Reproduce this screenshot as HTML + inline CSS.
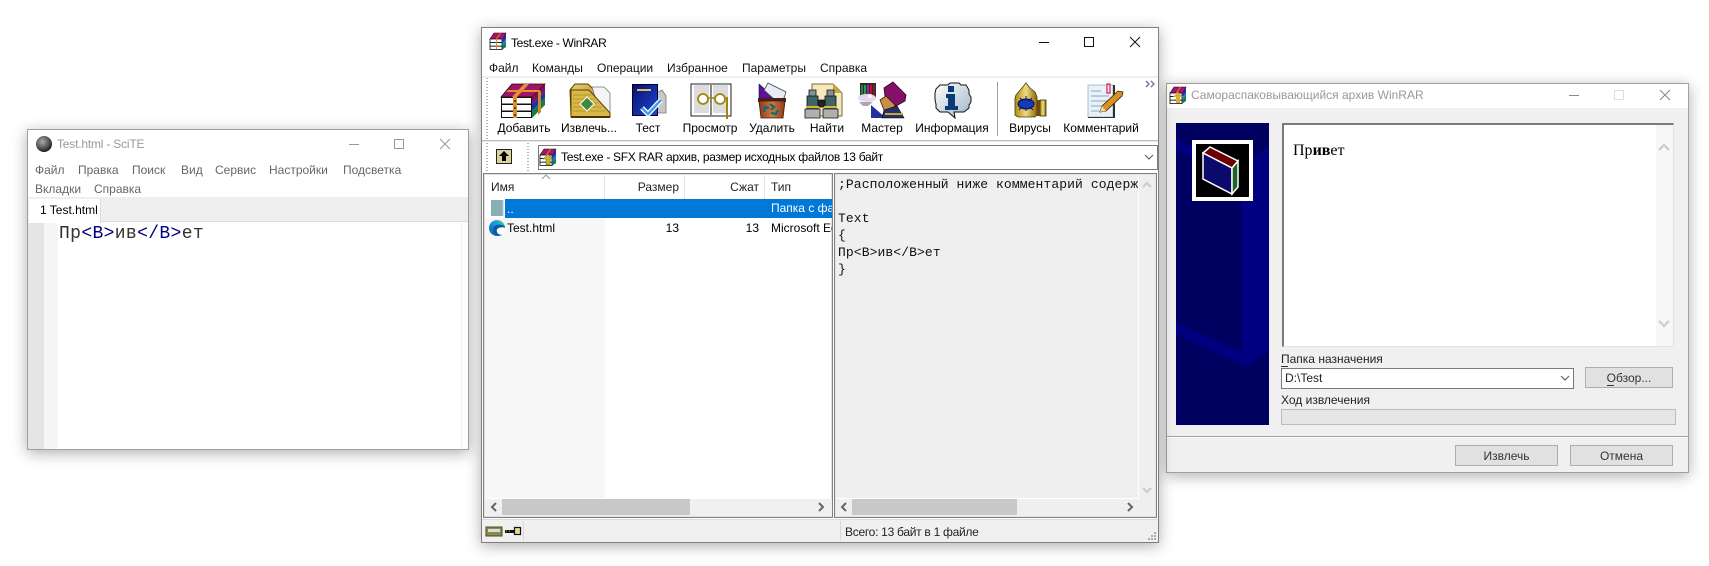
<!DOCTYPE html>
<html><head><meta charset="utf-8"><style>
html,body{margin:0;padding:0;width:1709px;height:566px;overflow:hidden;background:#fff}
body{position:relative;font:12px/16px "Liberation Sans",sans-serif;color:#000}
div{position:absolute;box-sizing:border-box}
.t{white-space:nowrap;height:16px}
.win{box-shadow:0 3px 14px rgba(0,0,0,.32)}
.d{color:#666}.g{color:#999}
.c{transform:translateX(-50%)}
.r{transform:translateX(-100%)}
.m{font-family:"Liberation Mono",monospace;font-size:13px;letter-spacing:.1px;color:#111;line-height:17px;height:17px;white-space:nowrap}
.btn{background:#e1e1e1;border:1px solid #adadad;text-align:center;line-height:20px;color:#333}
svg{position:absolute;left:0;top:0;overflow:visible}
</style></head><body>

<!-- SciTE -->
<div class="win" style="left:27px;top:129px;width:442px;height:321px;background:#fff;border:1px solid #a0a0a0"></div>
<div class="t g" style="left:57px;top:136px;font-size:12px;letter-spacing:-.2px">Test.html - SciTE</div>
<div class="t d" style="left:35px;top:162px">Файл</div>
<div class="t d" style="left:78px;top:162px">Правка</div>
<div class="t d" style="left:132px;top:162px">Поиск</div>
<div class="t d" style="left:181px;top:162px">Вид</div>
<div class="t d" style="left:215px;top:162px">Сервис</div>
<div class="t d" style="left:269px;top:162px">Настройки</div>
<div class="t d" style="left:343px;top:162px">Подсветка</div>
<div class="t d" style="left:35px;top:181px">Вкладки</div>
<div class="t d" style="left:94px;top:181px">Справка</div>
<div style="left:28px;top:197px;width:440px;height:25px;background:#efefef;border-bottom:1px solid #dcdcdc"></div>
<div style="left:29px;top:199px;width:72px;height:24px;background:#fff;border-right:1px solid #dcdcdc"></div>
<div class="t" style="left:40px;top:202px">1 Test.html</div>
<div style="left:28px;top:223px;width:16px;height:226px;background:#e4e4e4"></div>
<div style="left:44px;top:223px;width:14px;height:226px;background:#f5f5f5"></div>
<div style="left:461px;top:223px;width:1px;height:226px;background:#f0f0f0"></div>
<div style="left:59px;top:224px;height:20px;line-height:20px;white-space:nowrap;font-family:'Liberation Mono',monospace;font-size:18px;letter-spacing:.35px;color:#333">Пр<span style="color:#00007f">&lt;B&gt;</span>ив<span style="color:#00007f">&lt;/B&gt;</span>ет</div>

<!-- SFX window -->
<div class="win" style="left:1166px;top:83px;width:523px;height:390px;background:#f0f0f0;border:1px solid #a0a0a0"></div>
<div style="left:1167px;top:84px;width:521px;height:24px;background:#fff"></div>
<div class="t g" style="left:1191px;top:87px">Самораспаковывающийся архив WinRAR</div>
<div style="left:1282px;top:123px;width:392px;height:224px;background:#fff;border:1px solid #e3e3e3;border-top:2px solid #7a7a7a;border-left:2px solid #7a7a7a"></div>
<div style="left:1656px;top:125px;width:17px;height:221px;background:#f7f7f7"></div>
<div style="left:1293px;top:142px;height:18px;line-height:18px;white-space:nowrap;font-family:'Liberation Serif',serif;font-size:16px;color:#000">Пр<b>ив</b>ет</div>
<div class="t" style="left:1281px;top:351px;color:#222">Папка назначения</div>
<div style="left:1281px;top:366px;width:7px;height:1px;background:#333"></div>
<div style="left:1281px;top:368px;width:293px;height:21px;background:#fff;border:1px solid #7a7a7a"></div>
<div class="t" style="left:1285px;top:370px;color:#222">D:\Test</div>
<div class="btn" style="left:1585px;top:367px;width:88px;height:21px">Обзор...</div>
<div style="left:1607px;top:385px;width:7px;height:1px;background:#333"></div>
<div class="t" style="left:1281px;top:392px;color:#222">Ход извлечения</div>
<div style="left:1281px;top:409px;width:395px;height:16px;background:#e6e6e6;border:1px solid #bcbcbc"></div>
<div style="left:1167px;top:436px;width:521px;height:1px;background:#a0a0a0"></div>
<div style="left:1167px;top:437px;width:521px;height:1px;background:#fff"></div>
<div class="btn" style="left:1455px;top:445px;width:103px;height:21px">Извлечь</div>
<div class="btn" style="left:1570px;top:445px;width:103px;height:21px">Отмена</div>

<!-- WinRAR -->
<div class="win" style="left:481px;top:27px;width:678px;height:516px;background:#fff;border:1px solid #7f7f7f"></div>
<div class="t" style="left:511px;top:35px;letter-spacing:-.35px">Test.exe - WinRAR</div>
<div class="t" style="left:489px;top:60px;color:#111">Файл</div>
<div class="t" style="left:532px;top:60px;color:#111">Команды</div>
<div class="t" style="left:597px;top:60px;color:#111">Операции</div>
<div class="t" style="left:667px;top:60px;color:#111">Избранное</div>
<div class="t" style="left:742px;top:60px;color:#111">Параметры</div>
<div class="t" style="left:820px;top:60px;color:#111">Справка</div>
<div style="left:482px;top:76px;width:676px;height:2px;background:#f0f0f0"></div>
<div style="left:486px;top:78px;width:2px;height:62px;background:repeating-linear-gradient(#b5b5b5 0 1px,#fff 1px 3px)"></div>
<div class="t c" style="left:524px;top:120px">Добавить</div>
<div class="t c" style="left:589px;top:120px">Извлечь...</div>
<div class="t c" style="left:648px;top:120px">Тест</div>
<div class="t c" style="left:710px;top:120px">Просмотр</div>
<div class="t c" style="left:772px;top:120px">Удалить</div>
<div class="t c" style="left:827px;top:120px">Найти</div>
<div class="t c" style="left:882px;top:120px">Мастер</div>
<div class="t c" style="left:952px;top:120px">Информация</div>
<div style="left:997px;top:82px;width:1px;height:54px;background:#a0a0a0"></div>
<div class="t c" style="left:1030px;top:120px">Вирусы</div>
<div class="t c" style="left:1101px;top:120px">Комментарий</div>
<div style="left:482px;top:140px;width:676px;height:1px;background:#bdbdbd"></div>
<div style="left:482px;top:141px;width:676px;height:1px;background:#e8e8e8"></div>
<div style="left:486px;top:143px;width:2px;height:28px;background:repeating-linear-gradient(#b5b5b5 0 1px,#fff 1px 3px)"></div>
<div style="left:527px;top:143px;width:2px;height:28px;background:repeating-linear-gradient(#b5b5b5 0 1px,#fff 1px 3px)"></div>
<div style="left:538px;top:145px;width:620px;height:25px;background:#fff;border:1px solid #7a7a7a"></div>
<div class="t" style="left:561px;top:149px;letter-spacing:-.3px">Test.exe - SFX RAR архив, размер исходных файлов 13 байт</div>

<!-- list panel -->
<div style="left:483px;top:173px;width:350px;height:345px;background:#fff;border:1px solid #808080;outline:0"></div>
<div style="left:484px;top:174px;width:348px;height:343px;border:1px solid #e0e0e0"></div>
<div style="left:485px;top:218px;width:120px;height:280px;background:#f7f7f7"></div>
<div style="left:604px;top:175px;width:1px;height:24px;background:#e5e5e5"></div>
<div style="left:684px;top:175px;width:1px;height:24px;background:#e5e5e5"></div>
<div style="left:764px;top:175px;width:1px;height:24px;background:#e5e5e5"></div>
<div class="t" style="left:491px;top:179px;color:#222">Имя</div>
<div class="t r" style="left:679px;top:179px;color:#222">Размер</div>
<div class="t r" style="left:759px;top:179px;color:#222">Сжат</div>
<div class="t" style="left:771px;top:179px;color:#222">Тип</div>
<div style="left:505px;top:199px;width:327px;height:19px;background:#0078d7;overflow:hidden">
  <div class="t" style="left:2px;top:2px;color:#fff">..</div>
  <div class="t" style="left:266px;top:1px;color:#fff">Папка с файлами</div>
</div>
<div class="t" style="left:507px;top:220px">Test.html</div>
<div class="t r" style="left:679px;top:220px">13</div>
<div class="t r" style="left:759px;top:220px">13</div>
<div style="left:771px;top:220px;width:61px;height:16px;overflow:hidden;white-space:nowrap">Microsoft Edge</div>
<div style="left:485px;top:499px;width:347px;height:17px;background:#f0f0f0"></div>
<div style="left:502px;top:499px;width:188px;height:16px;background:#c8c8c8"></div>

<!-- comment panel -->
<div style="left:834px;top:173px;width:323px;height:345px;background:#efefef;border:1px solid #808080"></div>
<div style="left:835px;top:174px;width:321px;height:343px;border:1px solid #e4e4e4"></div>
<div style="left:1138px;top:175px;width:1px;height:323px;background:#fff"></div>
<div style="left:836px;top:498px;width:303px;height:1px;background:#fff"></div>
<div style="left:838px;top:176px;width:300px;height:17px;overflow:hidden"><div class="m">;Расположенный ниже комментарий содержит</div></div>
<div class="m" style="left:838px;top:210px">Text</div>
<div class="m" style="left:838px;top:227px">{</div>
<div class="m" style="left:838px;top:244px">Пр&lt;B&gt;ив&lt;/B&gt;ет</div>
<div class="m" style="left:838px;top:261px">}</div>
<div style="left:852px;top:499px;width:165px;height:16px;background:#c8c8c8"></div>

<!-- status bar -->
<div style="left:482px;top:519px;width:676px;height:23px;background:#f0f0f0;border-top:1px solid #dcdcdc"></div>
<div style="left:523px;top:521px;width:1px;height:20px;background:#d8d8d8"></div>
<div style="left:840px;top:521px;width:1px;height:20px;background:#d8d8d8"></div>
<div class="t" style="left:845px;top:524px;color:#222;letter-spacing:-.28px">Всего: 13 байт в 1 файле</div>

<!-- icons overlay -->
<svg width="1709" height="566" viewBox="0 0 1709 566">
<defs>
<radialGradient id="sph" cx=".4" cy=".35" r=".7"><stop offset="0" stop-color="#aaa"/><stop offset=".6" stop-color="#555"/><stop offset="1" stop-color="#111"/></radialGradient>
<linearGradient id="edge" x1="0" y1="1" x2="1" y2="0"><stop offset="0" stop-color="#0c59a4"/><stop offset=".6" stop-color="#1b9de2"/><stop offset="1" stop-color="#4fd96e"/></linearGradient>
<linearGradient id="bk" x1="0" y1="0" x2="1" y2="1"><stop offset="0" stop-color="#06106e"/><stop offset="1" stop-color="#2048d0"/></linearGradient>
<linearGradient id="gold" x1="0" y1="0" x2="1" y2="1"><stop offset="0" stop-color="#e9cf74"/><stop offset="1" stop-color="#a87c10"/></linearGradient>
<linearGradient id="can" x1="0" y1="0" x2="1" y2="0"><stop offset="0" stop-color="#b08c10"/><stop offset=".5" stop-color="#ecdc80"/><stop offset="1" stop-color="#8a6a08"/></linearGradient>
<linearGradient id="bub" x1="0" y1="0" x2="1" y2="1"><stop offset="0" stop-color="#fff"/><stop offset="1" stop-color="#9fb4c8"/></linearGradient>
<linearGradient id="bin" x1="0" y1="0" x2="1" y2="0"><stop offset="0" stop-color="#8c3a18"/><stop offset=".5" stop-color="#d07840"/><stop offset="1" stop-color="#8c3a18"/></linearGradient>
<g id="rar16">
  <path d="M0 6 4 0H16L13 6Z" fill="#a8146c" stroke="#200" stroke-width=".6"/>
  <rect x="0" y="6" width="12" height="3.6" fill="#fff" stroke="#111" stroke-width=".8"/>
  <rect x="0" y="9.6" width="12" height="3.6" fill="#fff" stroke="#111" stroke-width=".8"/>
  <rect x="0" y="13.2" width="12" height="3.4" fill="#fff" stroke="#111" stroke-width=".8"/>
  <path d="M12.5 6 16 1V6L12.5 10Z" fill="#2030b0"/><path d="M12.5 10 16 6V11L12.5 13.5Z" fill="#1a80c0"/><path d="M12.5 13.5 16 10V14L12.5 16.5Z" fill="#108040"/>
  <path d="M6 6 10 0H11L7 6V16H6Z" fill="#e09030"/>
</g>
</defs>

<!-- SciTE sphere & controls -->
<circle cx="44" cy="144" r="8" fill="url(#sph)"/>
<g stroke="#999" stroke-width="1" fill="none"><path d="M349 144.5h10"/><path d="M394.500 139.500h9v9h-9z"/><path d="M440 139l10 10M450 139l-10 10"/></g>

<!-- WinRAR title -->
<use href="#rar16" x="490" y="33"/>
<g stroke="#111" stroke-width="1" fill="none"><path d="M1039 42.500h10"/><path d="M1084.500 37.500h9v9h-9z"/><path d="M1130 37l10 10M1140 37l-10 10"/></g>

<!-- Добавить -->
<path d="M501 97 512 84H545L532 97Z" fill="#a01468" stroke="#201" stroke-width=".8"/>
<path d="M532 97 545 84V91L532 104Z" fill="#7c1050"/><path d="M532 104 545 91V98L532 111Z" fill="#2030a8"/><path d="M532 111 545 98V105L532 118Z" fill="#108040"/>
<g fill="#fff" stroke="#111" stroke-width="1"><rect x="501.500" y="97.500" width="30" height="6.500"/><rect x="501.500" y="104.500" width="30" height="6.500"/><rect x="501.500" y="111.500" width="30" height="6"/></g>
<path d="M512 97 524 84H529L517 97V118H513V97Z" fill="#e09030"/><path d="M506 92H540V90H508Z" fill="#e09030"/><path d="M538 91h3v21l-3 3Z" fill="#d08828"/>
<g fill="#6a3a10"><rect x="514" y="100" width="2" height="2"/><rect x="514" y="107" width="2" height="2"/><rect x="514" y="114" width="2" height="2"/></g>

<!-- Извлечь -->
<path d="M570 90 575 84H588L594 90H602V116H571Z" fill="url(#gold)" stroke="#5a4000"/>
<path d="M592 87H604L610 93V112H600Z" fill="#f4f4f4" stroke="#777" stroke-width=".8"/>
<path d="M571 90H589L610 113V117H571Z" fill="#d8b848" stroke="#5a4000"/>
<g stroke="#b8962c"><path d="M573 95h18M573 99h22M573 103h25M573 107h29M573 111h32"/></g>
<path d="M587 97l7 7-7 7-7-7Z" fill="#3f8a40" stroke="#fff"/>
<path d="M571 116H610V118H571Z" fill="#4a3500"/>

<!-- Тест -->
<path d="M656 93 662 90 666 96V113H654Z" fill="#c8c8c8" stroke="#777" stroke-width=".8"/>
<rect x="632.500" y="84.500" width="25" height="31" fill="url(#bk)" stroke="#000030"/>
<rect x="637" y="89" width="14" height="2" fill="#d8c060"/>
<path d="M642 108l6 6 13-14" fill="none" stroke="#fff" stroke-width="5"/>
<path d="M642 108l6 6 13-14" fill="none" stroke="#3aa0e8" stroke-width="2.500"/>

<!-- Просмотр -->
<path d="M691 84h40v32h-40z" fill="#fff" stroke="#222"/>
<path d="M694 85h15v28h-15zM713 85h15v28h-15z" fill="#dcdcdc"/>
<path d="M710 85h2v31h-2z" fill="#888"/>
<circle cx="703" cy="99" r="5" fill="#fff" stroke="#a08410" stroke-width="1.800"/>
<circle cx="720" cy="99" r="5" fill="#fff" stroke="#a08410" stroke-width="1.800"/>
<path d="M708 98h7" stroke="#a08410" stroke-width="1.500"/><path d="M727 97v22" stroke="#a08410" stroke-width="2"/>

<!-- Удалить -->
<path d="M759 84V99H776Z" fill="#5a10a0" stroke="#201040" stroke-width=".6"/>
<path d="M768 83 786 92 784 98 775 100 764 90Z" fill="#e8ecf4" stroke="#444" stroke-width=".8"/>
<path d="M758 98H786V102H758Z" fill="#4a2010"/>
<path d="M759 101H785L783 118H761Z" fill="url(#bin)" stroke="#40180a" stroke-width=".8"/>
<path d="M770 104l4 3-3 3M778 110l-2 4-5-1M764 112l1-5 4 1" fill="none" stroke="#0a6e78" stroke-width="2.200"/>

<!-- Найти -->
<path d="M812 84H833L842 93V116H812Z" fill="#f6e8bc" stroke="#7a6a38"/>
<path d="M833 84V93H842Z" fill="#c8a838"/>
<g stroke="#111" stroke-width=".8">
<path d="M809 90h7v7h-7zM827 90h7v7h-7z" fill="#889090"/>
<path d="M807 96h11v14h-11zM825 96h11v14h-11z" fill="#3f6468"/>
<path d="M818 100h7v7h-7z" fill="#222"/>
<path d="M805 109h15v9h-15zM823 109h15v9h-15z" fill="#b0b0b0"/>
</g>
<path d="M806 107h13M824 107h13" stroke="#d8b830" stroke-width="2"/>

<!-- Мастер -->
<rect x="860" y="83" width="16" height="15" fill="#302838"/>
<g><rect x="861" y="85" width="2" height="12" fill="#1a8a30"/><rect x="864" y="85" width="2" height="12" fill="#20a050"/><rect x="867" y="85" width="2" height="12" fill="#a020a0"/><rect x="870" y="85" width="2" height="12" fill="#c01030"/><rect x="873" y="85" width="2" height="12" fill="#802020"/></g>
<ellipse cx="867" cy="98" rx="9" ry="4" fill="#e6d8ec"/><circle cx="870" cy="96" r="2" fill="#fff"/>
<path d="M859 102h14l-5 4h-5Z" fill="#aaa"/>
<path d="M884 88 893 82 906 95 905 101 896 106 885 96Z" fill="#84106a" stroke="#2a0020" stroke-width=".8"/>
<path d="M880 100 886 96 895 105 892 111 884 110Z" fill="#c89048" stroke="#3a2008" stroke-width=".8"/>
<path d="M871 105 871 118 886 118Z" fill="#2030a0"/>
<path d="M884 110 897 106 904 118H882Z" fill="#28306a" stroke="#000" stroke-width=".6"/>
<path d="M885 114H903" stroke="#c8a828" stroke-width="2"/>

<!-- Информация -->
<path d="M940 85H948L950 83H959L961 85H966L969 90V94L971 97V102L969 105V108L964 112H954L955 118 948 112H940L936 108V104L935 100V93L936 89Z" fill="url(#bub)" stroke="#111" stroke-width="1"/>
<rect x="948" y="86" width="6" height="6" fill="#0a3a78"/>
<path d="M946 94H955V106H958V110H945V106H948V98H946Z" fill="#0a3a78"/>

<!-- Вирусы -->
<path d="M1016 95 1022 88 1026 83 1030 88 1035 92 1037 97V115L1035 117H1018L1015 115V98Z" fill="url(#can)" stroke="#4a3a00" stroke-width=".8"/>
<ellipse cx="1026" cy="104" rx="8" ry="5" fill="#1838b8" stroke="#081050"/>
<g stroke="#0a1a60"><path d="M1020 98l3 3M1026 96v4M1032 98l-3 3M1019 110l3-3M1026 111v-3M1033 110l-3-3"/></g>
<rect x="1040" y="100" width="6" height="16" fill="url(#can)" stroke="#3a2a00" stroke-width=".8"/>
<path d="M1037 100h3v16h-3z" fill="#6a4a10"/>

<!-- Комментарий -->
<path d="M1088 85H1113V117H1088Z" fill="#e8f0f8" stroke="#9ab0c8" stroke-width=".8"/>
<path d="M1113 85h2v32h-2zM1088 117h27v1h-27z" fill="#333"/>
<g stroke="#8aa6c4"><path d="M1091 91h10M1091 96h18M1091 101h18M1091 106h18M1091 111h10"/></g>
<path d="M1107 84h3v9h-3z" fill="none" stroke="#e02050" stroke-width="1.200"/>
<path d="M1100 112 1102 106 1118 91 1123 92 1122 96 1106 111Z" fill="#d89028" stroke="#3a2000" stroke-width=".8"/>
<path d="M1100 112l6-1-4-5Z" fill="#f0d8a0"/>

<path d="M1146 81l3 3-3 3M1151 81l3 3-3 3" fill="none" stroke="#6d6da8" stroke-width="1.300"/>

<!-- up button -->
<rect x="496.500" y="149.500" width="15" height="14" fill="#d8d49c" stroke="#222"/>
<path d="M504 151 509 156H506V161H502V156H499Z" fill="#000"/>

<!-- combo icon -->
<use href="#rar16" x="540" y="149"/>
<path d="M548 154 553 159H550V165H546V159H543Z" fill="#d8b030" stroke="#063" stroke-width=".4"/>
<path d="M1145 155l4 4 4-4" fill="none" stroke="#666" stroke-width="1.200"/>

<!-- sort caret, list icons -->
<path d="M542 179l4-4 4 4" fill="none" stroke="#999"/>
<path d="M491 200H503V216H491Z" fill="#88b0b4"/><path d="M503 200v16" stroke="#b0c8c8"/>
<circle cx="497" cy="228" r="8" fill="url(#edge)"/>
<ellipse cx="501" cy="231" rx="5" ry="3.500" fill="#fff" transform="rotate(-15 501 231)"/>
<path d="M493 230C493 225 498 223 505 226 505 228 498 226 497 229 496 232 498 235 502 235 498 237 493 235 493 230Z" fill="#0c59a4"/>

<!-- scrollbar arrows -->
<g fill="none" stroke="#666" stroke-width="2">
<path d="M496 503l-4 4 4 4M819 503l4 4-4 4"/>
<path d="M846 503l-4 4 4 4M1128 503l4 4-4 4"/>
</g>
<g fill="none" stroke="#ccc" stroke-width="2.200">
<path d="M1143 187l4-4 4 4M1143 488l4 4 4-4"/>
<path d="M1659 150l5-5 5 5M1659 321l5 5 5-5"/>
</g>
<path d="M1561 376l4 4 4-4" fill="none" stroke="#666" stroke-width="1.200"/>

<!-- status icons -->
<rect x="486" y="527" width="16" height="9" fill="#8a8a50" stroke="#4a4a20"/>
<rect x="488" y="529" width="12" height="3" fill="#d8e0d0"/>
<path d="M505 530h9v3h-9z" fill="#111"/><path d="M506 531h1M509 531h1" stroke="#d8c050"/>
<rect x="514.500" y="527.500" width="6" height="7" fill="#e8d8a0" stroke="#111" stroke-width="1.200"/>
<g fill="#aaa"><rect x="1154" y="532" width="2" height="2"/><rect x="1151" y="535" width="2" height="2"/><rect x="1154" y="535" width="2" height="2"/><rect x="1148" y="538" width="2" height="2"/><rect x="1151" y="538" width="2" height="2"/><rect x="1154" y="538" width="2" height="2"/></g>

<!-- SFX title -->
<use href="#rar16" x="1170" y="87"/>
<path d="M1178 92 1183 97H1180V103H1176V97H1173Z" fill="#d8b030"/>
<g fill="none"><path d="M1569 95.500h10" stroke="#888"/><path d="M1614.500 90.500h9v9h-9z" stroke="#ddd"/><path d="M1660 90l10 10M1670 90l-10 10" stroke="#888"/></g>

<!-- SFX picture -->
<rect x="1176" y="123" width="93" height="302" fill="#000060"/>
<path d="M1269 145 1253 158V201H1241V352L1176 322V335L1247 367 1269 350Z" fill="#000080"/>
<path d="M1176 138 1192 147V157L1176 150Z" fill="#000080"/>
<rect x="1192" y="140" width="61" height="61" fill="#fff"/>
<rect x="1196" y="144" width="53" height="53" fill="#000"/>
<g transform="translate(1 0)">
<path d="M1202 153 1209 147 1237 161 1231 168Z" fill="#6b0000" stroke="#fff" stroke-width="1.500"/>
<path d="M1202 153 1231 168V194L1202 179Z" fill="#0a0a6c" stroke="#fff" stroke-width="1.500"/>
<path d="M1231 168 1237 161V187L1231 194Z" fill="#1e6428" stroke="#fff" stroke-width="1.500"/>
</g>
</svg>
</body></html>
